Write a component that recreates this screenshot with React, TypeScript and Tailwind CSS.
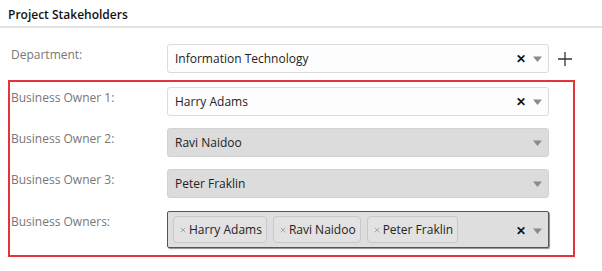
import { X } from "lucide-react";

type SelectProps = {
  value: string;
  disabled?: boolean;
  clearable?: boolean;
};

function Arrow() {
  return (
    <svg width="9" height="6" viewBox="0 0 9 6" className="shrink-0">
      <path d="M0 0.5h9L4.5 6z" fill="#8a8a8a" />
    </svg>
  );
}

function Clear() {
  return (
    <span className="text-[12px] font-bold leading-none text-[#111]">✕</span>
  );
}

function Select({ value, disabled = false, clearable = true }: SelectProps) {
  return (
    <div
      className={`flex h-[29px] w-[382px] items-center rounded-[3px] border pl-[7px] pr-[6px] ${
        disabled ? "border-[#d2d2d2] bg-[#dcdcdc]" : "border-[#dcdcdc] bg-[#fdfdfd]"
      }`}
    >
      <span className="flex-1 text-[12px] leading-[18px] text-[#222]">{value}</span>
      <div className="flex items-center gap-[7px]">
        {clearable && <Clear />}
        <Arrow />
      </div>
    </div>
  );
}

function Tag({ label }: { label: string }) {
  return (
    <div className="flex h-[27px] items-center gap-[2px] rounded-[4px] border border-[#c8c8c8] bg-[#e2e2e2] pl-[5px] pr-[4px]">
      <X className="h-[8px] w-[8px] text-[#999]" strokeWidth={2.5} />
      <span className="text-[12px] leading-[18px] text-[#222]">{label}</span>
    </div>
  );
}

function Row({ label, children }: { label: string; children: React.ReactNode }) {
  return (
    <div className="flex">
      <div className="w-[156px] pt-[2px] text-[12px] leading-[18px] text-[#777]">{label}</div>
      {children}
    </div>
  );
}

export default function App() {
  return (
    <div className="h-[271px] w-[602px] bg-white font-['Open_Sans',sans-serif]">
      <div className="h-[28px] border-b-2 border-[#e4e4e4] pl-[8px] pt-[7px] text-[12px] font-semibold leading-[16px] text-[#111]">
        Project Stakeholders
      </div>

      <div className="mt-[16px] flex items-start pl-[11px]">
        <Row label="Department:">
          <Select value="Information Technology" />
        </Row>
        <svg width="14" height="14" viewBox="0 0 14 14" className="ml-[9px] mt-[8px]">
          <path d="M7 0v14M0 7h14" stroke="#333" strokeWidth="1.3" />
        </svg>
      </div>

      <div className="ml-[8px] mt-[7px] flex w-[567px] flex-col gap-[12px] border-2 border-[#e6333a] pb-[7px] pl-[1px] pt-[5px]">
        <Row label="Business Owner 1:">
          <Select value="Harry Adams" />
        </Row>
        <Row label="Business Owner 2:">
          <Select value="Ravi Naidoo" disabled clearable={false} />
        </Row>
        <Row label="Business Owner 3:">
          <Select value="Peter Fraklin" disabled clearable={false} />
        </Row>
        <div className="mt-[1px]">
          <Row label="Business Owners:">
            <div className="flex h-[37px] w-[382px] items-center rounded-[2px] border border-[#555] bg-[#dedede] pl-[5px] pr-[6px] shadow-[1px_1px_1px_rgba(0,0,0,0.45)]">
              <div className="flex flex-1 gap-[6px]">
                <Tag label="Harry Adams" />
                <Tag label="Ravi Naidoo" />
                <Tag label="Peter Fraklin" />
              </div>
              <div className="flex items-center gap-[7px] pt-[2px]">
                <Clear />
                <Arrow />
              </div>
            </div>
          </Row>
        </div>
      </div>
    </div>
  );
}
